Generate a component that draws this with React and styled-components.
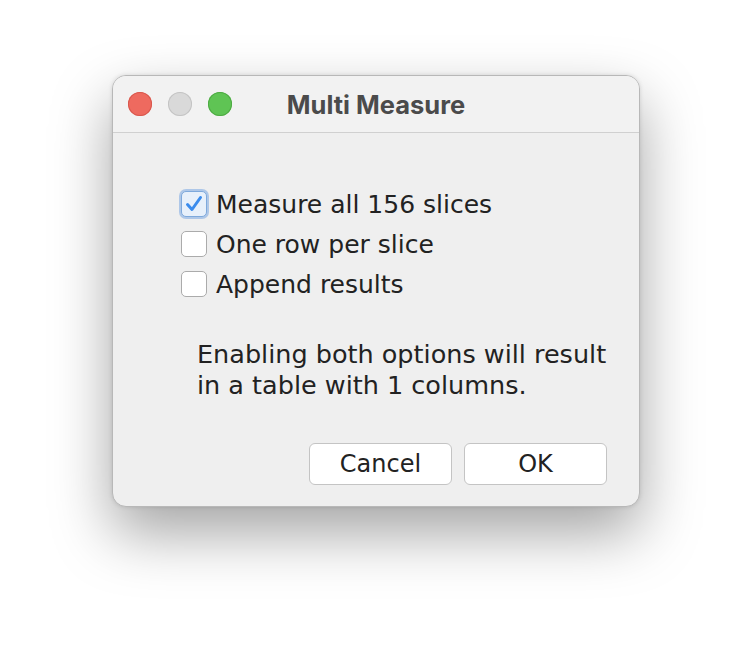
import React from 'react';
import styled, { createGlobalStyle } from 'styled-components';

const GlobalStyle = createGlobalStyle`
  html, body {
    margin: 0;
    padding: 0;
    background: #ffffff;
  }
  body {
    font-family: "DejaVu Sans", "Liberation Sans", sans-serif;
  }
`;

const Page = styled.div`
  width: 752px;
  height: 656px;
  padding: 75px 0 0 112px;
  box-sizing: border-box;
  background: #ffffff;
`;

const Window = styled.div`
  width: 528px;
  height: 432px;
  box-sizing: border-box;
  background: #efefef;
  border-radius: 14px;
  border: 1px solid #b8b8b8;
  box-shadow: 0 26px 60px rgba(0, 0, 0, 0.36), 0 0 4px rgba(0, 0, 0, 0.12);
  display: flex;
  flex-direction: column;
  overflow: hidden;
`;

const TitleBar = styled.div`
  height: 56px;
  flex: none;
  display: flex;
  align-items: center;
  position: relative;
  background: #f2f2f2;
  border-bottom: 1px solid #d0d0d0;
`;

const Lights = styled.div`
  display: flex;
  gap: 16px;
  padding-left: 15px;
`;

const Light = styled.span`
  width: 24px;
  height: 24px;
  border-radius: 50%;
  background: ${p => p.color};
  box-shadow: inset 0 0 0 1px ${p => p.edge};
`;

const Title = styled.div`
  position: absolute;
  left: 0;
  right: 0;
  text-align: center;
  font-family: Inter, "DejaVu Sans", sans-serif;
  font-weight: 700;
  font-size: 25.5px;
  color: #4b4b4b;
  pointer-events: none;
`;

const Body = styled.div`
  flex: 1;
  display: flex;
  flex-direction: column;
  padding: 51px 32px 21px 67px;
  color: #222222;
  font-size: 25px;
`;

const Options = styled.div`
  display: flex;
  flex-direction: column;
`;

const Option = styled.label`
  height: 40px;
  display: flex;
  align-items: center;
  gap: 9px;
`;

const Box = styled.span`
  width: 26px;
  height: 26px;
  flex: none;
  box-sizing: border-box;
  border-radius: 5px;
  display: flex;
  align-items: center;
  justify-content: center;
  background: ${p => (p.checked ? '#e7f0fb' : '#ffffff')};
  border: 1.5px solid ${p => (p.checked ? '#7ea9dc' : '#ababab')};
  box-shadow: ${p => (p.checked ? '0 0 0 2px rgba(120, 165, 225, 0.55)' : 'none')};
  margin-left: 1px;
`;

const Note = styled.p`
  margin: 35px 0 0 17px;
  line-height: 31px;
  font-size: 25.5px;
`;

const Buttons = styled.div`
  margin-top: auto;
  display: flex;
  justify-content: flex-end;
  gap: 12px;
`;

const Button = styled.button`
  width: 143px;
  height: 42px;
  box-sizing: border-box;
  background: #ffffff;
  border: 1.5px solid #c4c4c4;
  border-radius: 6px;
  font-family: "DejaVu Sans", sans-serif;
  font-size: 24px;
  color: #222222;
  padding: 0;
`;

const Check = () => (
  <svg width="20" height="20" viewBox="0 0 20 20">
    <path d="M3.5 10.5 L8 15.5 L16.5 3.5" fill="none" stroke="#3b8ced" strokeWidth="3" strokeLinecap="round" strokeLinejoin="round" />
  </svg>
);

const options = [
  { label: 'Measure all 156 slices', checked: true },
  { label: 'One row per slice', checked: false },
  { label: 'Append results', checked: false },
];

export default function App() {
  return (
    <Page>
      <GlobalStyle />
      <Window>
        <TitleBar>
          <Lights>
            <Light color="#ee6a5f" edge="#d8584e" />
            <Light color="#d9d9d9" edge="#c4c4c4" />
            <Light color="#5fc454" edge="#4eaa43" />
          </Lights>
          <Title>Multi Measure</Title>
        </TitleBar>
        <Body>
          <Options>
            {options.map(o => (
              <Option key={o.label}>
                <Box checked={o.checked}>{o.checked && <Check />}</Box>
                {o.label}
              </Option>
            ))}
          </Options>
          <Note>
            Enabling both options will result
            <br />
            in a table with 1 columns.
          </Note>
          <Buttons>
            <Button>Cancel</Button>
            <Button>OK</Button>
          </Buttons>
        </Body>
      </Window>
    </Page>
  );
}
